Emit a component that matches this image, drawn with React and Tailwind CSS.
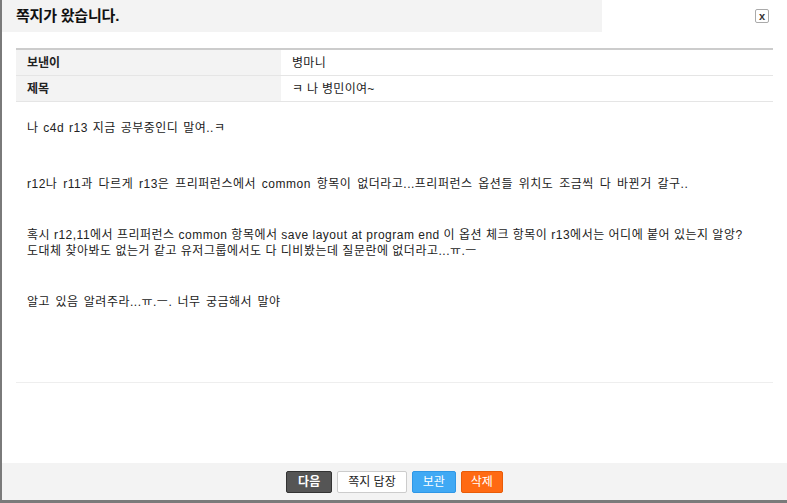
export default function App() {
  const kfont = { fontFamily: '"Liberation Sans", "Noto Sans CJK KR", sans-serif' };
  return (
    <div className="w-[787px] h-[503px] bg-white flex flex-col border-l-2 border-b-[3px] border-[#7a7a7a] text-[#222]" style={kfont}>
      <div className="flex items-start justify-between h-[48px]">
        <div className="w-[600px] h-[32px] bg-[#f3f3f3] flex items-center pl-[14px]">
          <span className="text-[15px] font-bold text-[#111] tracking-[-0.2px]">쪽지가 왔습니다.</span>
        </div>
        <button className="mt-[9px] mr-[18px] w-[14px] h-[14px] border border-[#aaa] rounded-[2px] flex items-center justify-center text-[11px] font-bold leading-none text-[#333] bg-white">x</button>
      </div>
      <div className="mx-[14px] border-t-2 border-[#ccc]">
        <div className="flex h-[26px] border-b border-[#e5e5e5] text-[12px]">
          <div className="w-[265px] bg-[#f3f3f3] flex items-center pl-[11px] font-bold">보낸이</div>
          <div className="flex items-center pl-[11px] tracking-[0.3px]">병마니</div>
        </div>
        <div className="flex h-[26px] border-b border-[#e5e5e5] text-[12px]">
          <div className="w-[265px] bg-[#f3f3f3] flex items-center pl-[11px] font-bold">제목</div>
          <div className="flex items-center pl-[11px] tracking-[0.3px]">ㅋ 나 병민이여~</div>
        </div>
      </div>
      <div className="mx-[14px] h-[281px] border-b border-[#eee] px-[11px] pt-[18px] text-[12px] leading-[16px] tracking-[0.5px]">
        <p className="[word-spacing:1px]">나 c4d r13 지금 공부중인디 말여..ㅋ</p>
        <p className="mt-[40px] [word-spacing:2px]">r12나 r11과 다르게 r13은 프리퍼런스에서 common 항목이 없더라고...프리퍼런스 옵션들 위치도 조금씩 다 바뀐거 갈구..</p>
        <p className="mt-[35px]">혹시 r12,11에서 프리퍼런스 common 항목에서 save layout at program end 이 옵션 체크 항목이 r13에서는 어디에 붙어 있는지 알앙?</p>
        <p>도대체 찾아봐도 없는거 같고 유저그룹에서도 다 디비봤는데 질문란에 없더라고...ㅠ.ㅡ</p>
        <p className="mt-[35px] [word-spacing:1.5px]">알고 있음 알려주라...ㅠ.ㅡ. 너무 궁금해서 말야</p>
      </div>
      <div className="flex-1" />
      <div className="h-[37px] bg-[#f3f3f3] flex items-center justify-center gap-[5px] text-[12px]">
        <button className="h-[22px] px-[11px] bg-[#555] border border-[#333] rounded-[2px] text-white font-bold">다음</button>
        <button className="h-[22px] px-[10px] bg-white border border-[#ccc] rounded-[2px] text-[#222]">쪽지 답장</button>
        <button className="h-[22px] px-[10px] bg-[#40a9f4] border border-[#2f97e6] rounded-[2px] text-white">보관</button>
        <button className="h-[22px] px-[9px] bg-[#ff6a13] border border-[#e85c08] rounded-[2px] text-white">삭제</button>
      </div>
    </div>
  );
}
